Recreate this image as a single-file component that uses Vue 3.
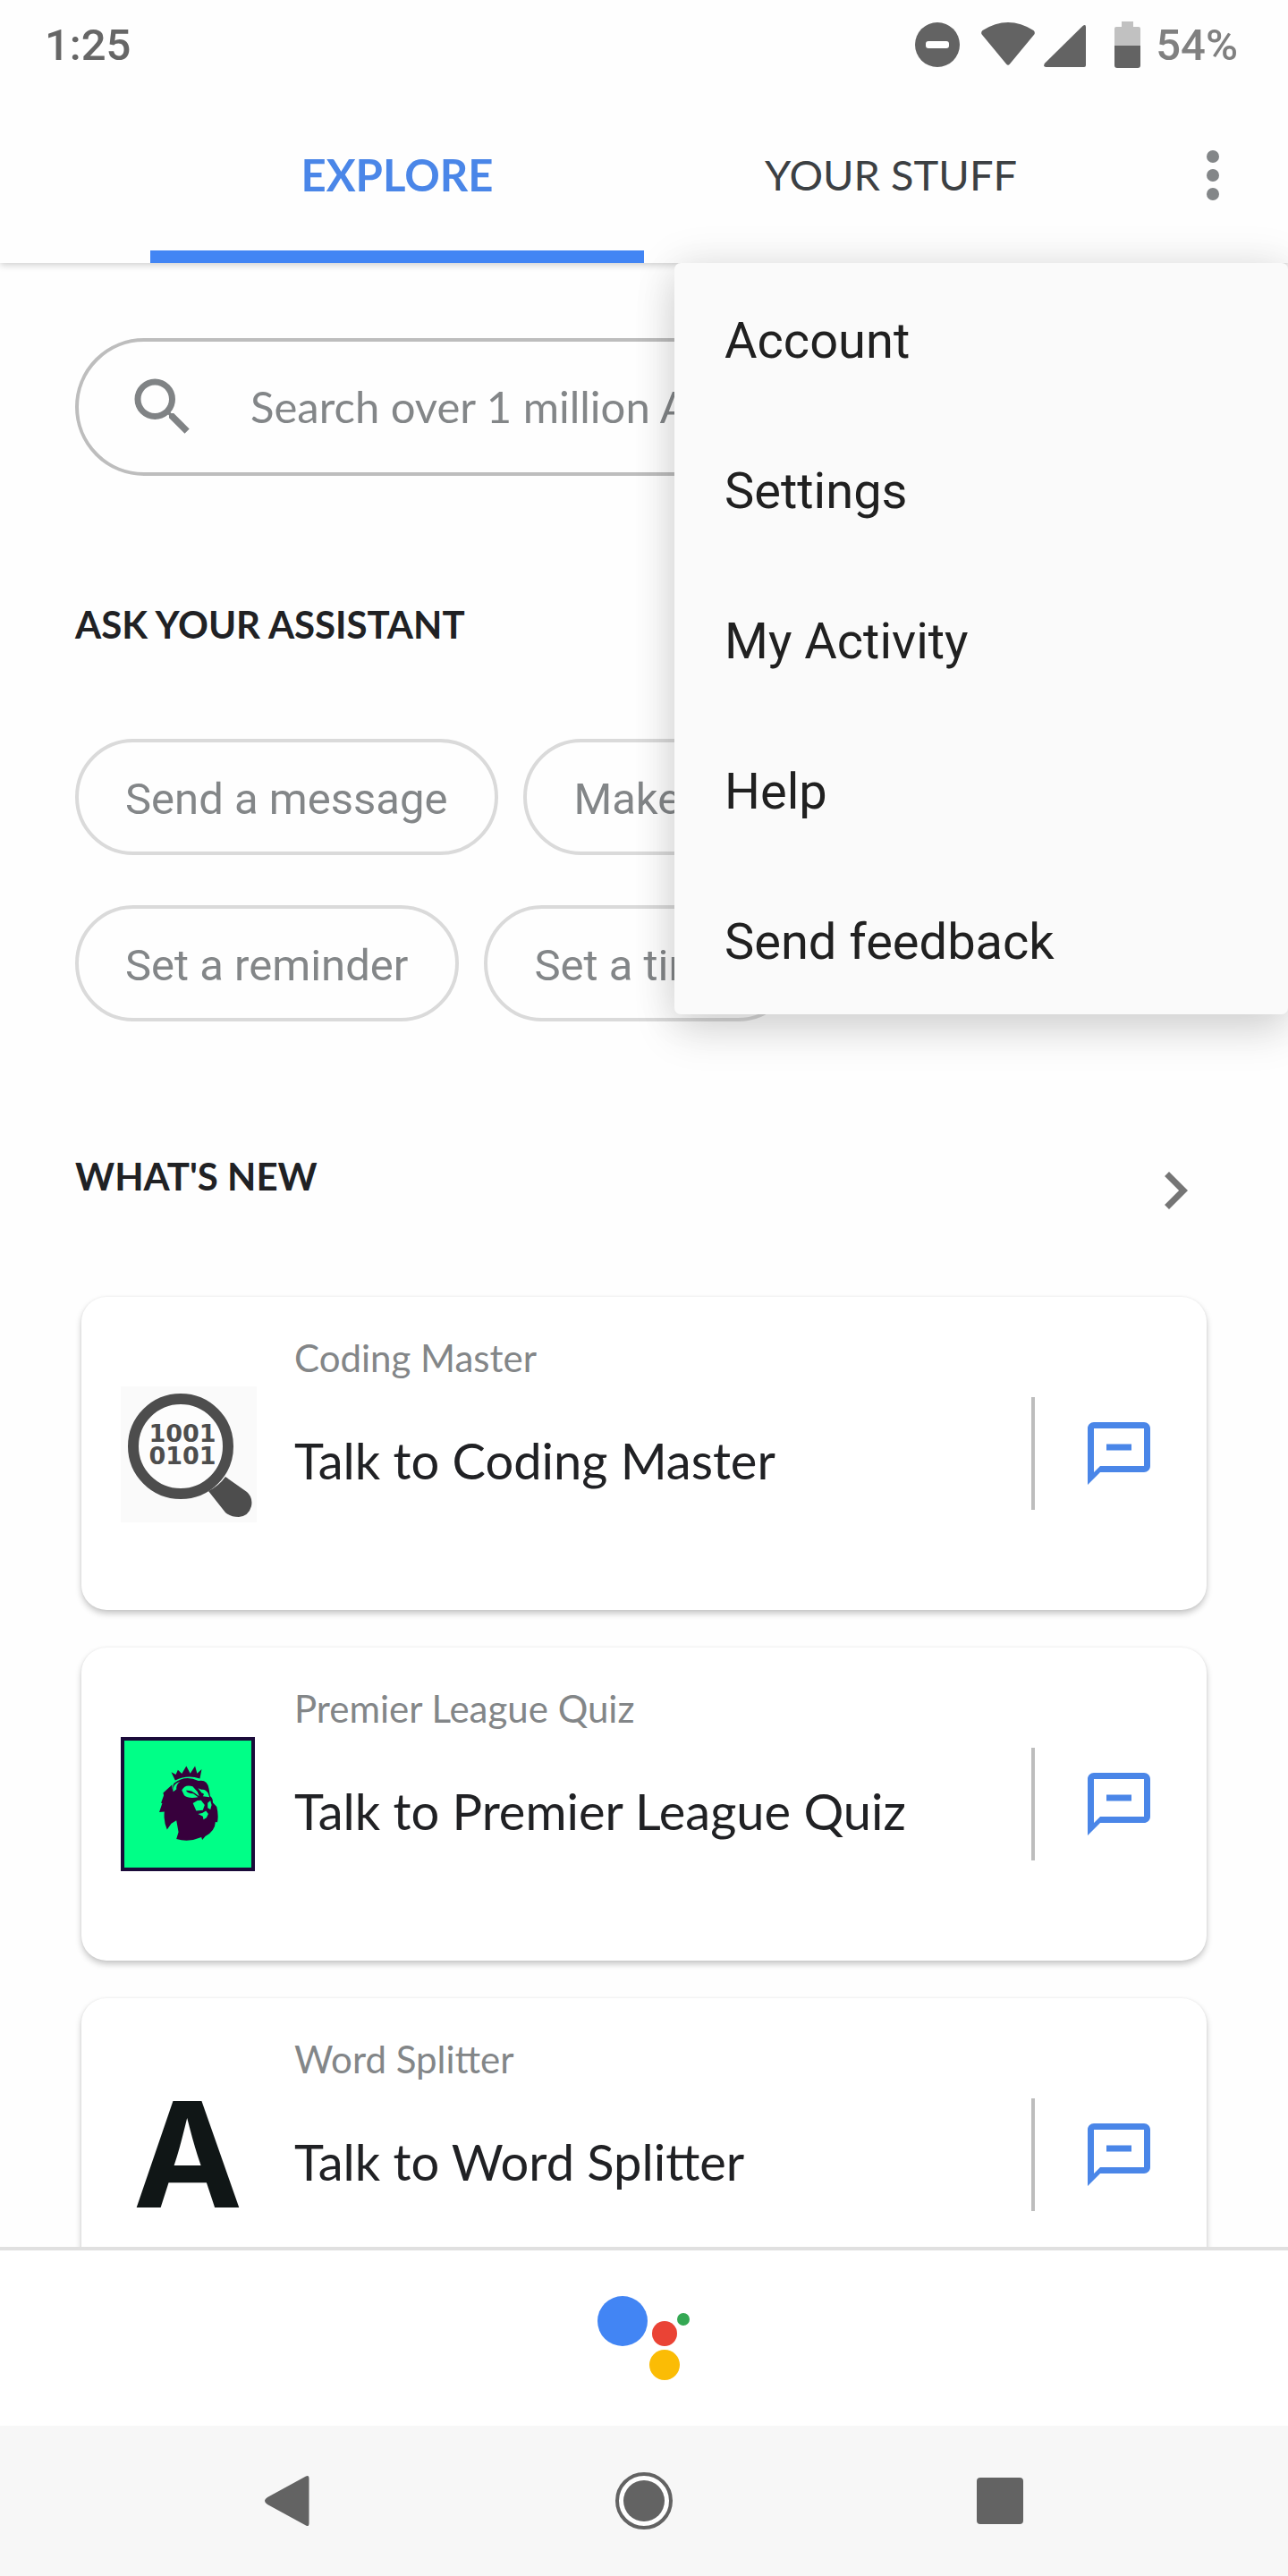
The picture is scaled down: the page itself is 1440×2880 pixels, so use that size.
<template>
  <div class="app">
    <div class="status">
      <span class="clock">1:25</span>
      <svg class="st-dnd" viewBox="0 0 50 50" aria-hidden="true">
        <circle cx="25" cy="25" r="25" />
        <rect x="12" y="21" width="26" height="8" rx="3" fill="#fff" />
      </svg>
      <svg class="st-wifi" viewBox="0 0 60 50" aria-hidden="true">
        <path d="M1.500 9Q30-9 58.500 9q2.200 2 .8 4.500L32 46.500q-2 2.500-4 0L.7 13.500Q-.7 11 1.500 9z" />
      </svg>
      <svg class="st-signal" viewBox="0 0 48 50" aria-hidden="true">
        <path d="M43.500 4Q47 1.500 47 5.500V48q0 2-2 2H2.500Q-1 50 .8 46z" />
      </svg>
      <svg class="st-battery" viewBox="0 0 30 52" aria-hidden="true">
        <path d="M8 0h13v6h6q2 0 2 2v19H0V8q0-2 2-2h6z" fill="#c1c1c1" />
        <path d="M0 27h29v22q0 3-3 3H3q-3 0-3-3z" />
      </svg>
      <span class="percent">54%</span>
    </div>

    <header class="header">
      <nav class="tabs">
        <a v-for="t in tabs" :key="t" href="#" :class="['tab', { active: t === current }]"
          @click.prevent="current = t">{{ t }}</a>
      </nav>
      <button class="more" type="button" aria-label="More options" @click="menuOpen = !menuOpen">
        <svg viewBox="0 0 84 84" aria-hidden="true">
          <circle cx="42" cy="21" r="7" />
          <circle cx="42" cy="42" r="7" />
          <circle cx="42" cy="63" r="7" />
        </svg>
      </button>
      <div v-if="menuOpen" class="menu">
        <button v-for="m in menuItems" :key="m" type="button" class="menu-item">{{ m }}</button>
      </div>
    </header>

    <main class="content">
      <label class="search">
        <svg class="icon" viewBox="0 0 24 24" aria-hidden="true">
          <path d="M15.500 14h-.79l-.28-.27A6.470 6.470 0 0 0 16 9.500 6.500 6.500 0 1 0 9.500 16c1.610 0 3.090-.59 4.230-1.570l.27.28v.79l5 4.990L20.490 19l-4.990-5zm-6 0C7.010 14 5 11.990 5 9.500S7.010 5 9.500 5 14 7.010 14 9.500 11.990 14 9.500 14z" />
        </svg>
        <input type="text" placeholder="Search over 1 million Actions" aria-label="Search Actions">
      </label>

      <h2 class="heading ask">ASK YOUR ASSISTANT</h2>
      <div class="chips">
        <div v-for="(row, i) in chips" :key="i" class="chip-row">
          <button v-for="c in row" :key="c" type="button" class="chip">{{ c }}</button>
        </div>
      </div>

      <div class="section-head">
        <h2 class="heading">WHAT'S NEW</h2>
        <button class="next" type="button" aria-label="See all new Actions">
          <svg class="icon" viewBox="0 0 24 24" aria-hidden="true">
            <path d="M10 6L8.590 7.410 13.170 12l-4.580 4.590L10 18l6-6z" />
          </svg>
        </button>
      </div>

      <div class="cards">
        <article v-for="card in cards" :key="card.name" class="card">
          <svg v-if="card.logo === 'coding'" class="logo" viewBox="0 0 150 150" aria-hidden="true">
            <rect width="152" height="152" fill="#fafafa" />
            <circle cx="67" cy="67" r="53" fill="#fdfdfd" stroke="#4d4d4d" stroke-width="12" />
            <path d="M117 101L141 118Q148 124 146 134Q143 145 132 146Q123 146 117 141L98 117Q110 111 117 101z" fill="#4d4d4d" />
            <text x="69" y="62" class="bits">1001</text>
            <text x="69" y="87" class="bits">0101</text>
          </svg>
          <svg v-else-if="card.logo === 'league'" class="logo" viewBox="45 36 446 446" aria-hidden="true">
            <rect x="51" y="42" width="434" height="434" fill="#00ff87" stroke="#1b0b3a" stroke-width="12" />
            <g fill="#37003c">
              <path d="M213 153L228 161 235 145 248 158 263 133 276 157 292 133 299 157 314 143 308 174Q266 160 226 180z" />
              <path d="M222 190Q260 160 303 182Q333 176 338 208L342 232Q352 240 351 254L364 268Q371 296 366 320L360 318Q358 350 326 366L316 378 313 369Q272 387 230 375L237 352 230 313 213 324 199 344Q187 318 190 284L173 286 183 256 179 255 188 230 186 222 216 194Q214 208 220 216Q216 200 222 190z" />
            </g>
            <g fill="#00ff87">
              <path d="M219 218Q216 192 242 184Q228 196 230 210z" />
              <path d="M248 213Q258 192 284 200L300 218 306 233 290 222Q280 212 262 214Q266 224 286 224L302 236Q270 242 256 230z" />
              <path d="M302 206L313 211Q326 208 335 222L340 236 318 233Q326 224 314 222z" />
              <path d="M285 256L300 247 312 246 324 262 318 279 296 281z" />
              <path d="M334 255L343 247 347 262 343 277 334 272z" />
              <path d="M302 292L316 289 328 281 336 292 330 304 320 310 318 300z" />
            </g>
          </svg>
          <svg v-else class="logo" viewBox="0 0 150 150" aria-hidden="true">
            <text x="75" y="134" class="letter">A</text>
          </svg>
          <div class="card-text">
            <p class="card-name">{{ card.name }}</p>
            <h3 class="card-title">Talk to {{ card.name }}</h3>
          </div>
          <button class="talk" type="button" :aria-label="'Talk to ' + card.name">
            <svg class="icon" viewBox="0 0 24 24" aria-hidden="true">
              <path d="M20 2H4c-1.100 0-2 .9-2 2v18l4-4h14c1.100 0 2-.9 2-2V4c0-1.100-.9-2-2-2zm0 14H6l-2 2V4h16v12zM8 9h8v2H8z" />
            </svg>
          </button>
        </article>
      </div>
    </main>

    <footer class="assistant">
      <button type="button" aria-label="Google Assistant">
        <svg viewBox="0 0 104 96" aria-hidden="true">
          <circle cx="28" cy="29" r="28" fill="#4285f4" />
          <circle cx="75" cy="43" r="14" fill="#ea4335" />
          <circle cx="96" cy="27" r="7" fill="#34a853" />
          <circle cx="75" cy="78" r="17" fill="#fbbc05" />
        </svg>
      </button>
    </footer>

    <nav class="sysnav">
      <button type="button" aria-label="Back">
        <svg viewBox="0 0 64 64" aria-hidden="true">
          <path d="M54 4.500Q57.500 2.500 57.500 7V57Q57.500 61.500 54 59.500L11 36Q5 32 11 28z" />
        </svg>
      </button>
      <button type="button" aria-label="Home">
        <svg viewBox="0 0 64 64" aria-hidden="true">
          <circle cx="32" cy="32" r="30" fill="#fff" stroke="#636363" stroke-width="4" />
          <circle cx="32" cy="32" r="23" />
        </svg>
      </button>
      <button type="button" aria-label="Recent apps">
        <svg viewBox="0 0 64 64" aria-hidden="true">
          <rect x="4" y="6" width="52" height="52" rx="4" />
        </svg>
      </button>
    </nav>
  </div>
</template>

<script setup>
import { ref } from 'vue'

const tabs = ['EXPLORE', 'YOUR STUFF']
const current = ref('EXPLORE')
const menuOpen = ref(true)
const menuItems = ['Account', 'Settings', 'My Activity', 'Help', 'Send feedback']

const chips = [
  ['Send a message', 'Make a call'],
  ['Set a reminder', 'Set a timer'],
]

const cards = [
  { name: 'Coding Master', logo: 'coding' },
  { name: 'Premier League Quiz', logo: 'league' },
  { name: 'Word Splitter', logo: 'letter' },
]
</script>

<style>
body { margin: 0; background: #fefefe; }
</style>

<style scoped>
.app { display: flex; flex-direction: column; height: 100vh; overflow: hidden; background: #fefefe; color: #202124; font-family: Lato, "Open Sans", sans-serif; }
button { margin: 0; padding: 0; border: 0; background: none; font: inherit; color: inherit; cursor: pointer; }
svg { display: block; flex: none; }
.icon { width: 84px; height: 84px; fill: currentColor; }

.status { position: relative; z-index: 3; display: flex; align-items: center; flex: none; height: 98px; padding: 2px 56px 0 50px; box-sizing: border-box; background: #fefefe; font-family: Roboto, sans-serif; font-size: 49px; font-weight: 500; color: #666; fill: #636363; }
.clock { flex: 1; }
.percent { margin-left: 16px; color: #808080; }
.st-dnd { width: 50px; height: 50px; }
.st-wifi { width: 60px; height: 50px; margin-left: 24px; }
.st-signal { width: 48px; height: 50px; margin-left: 10px; }
.st-battery { width: 30px; height: 52px; margin-left: 31px; }

.header { position: relative; z-index: 2; display: flex; flex: none; height: 196px; padding-left: 168px; background: #fefefe; box-shadow: 0 2px 8px rgba(0,0,0,0.2); }
.tabs { display: flex; flex: 1; }
.tab { flex: 1; padding-top: 12px; border-bottom: 14px solid transparent; font-size: 47px; line-height: 170px; text-align: center; text-decoration: none; color: #3c4043; }
.tab.active { border-color: #4285f4; font-size: 49px; font-weight: 700; color: #4a86e8; }
.more { display: flex; align-items: center; justify-content: center; width: 168px; }
.more svg { width: 84px; height: 84px; fill: #838688; }

.menu { position: absolute; top: 100%; right: 0; width: 686px; max-width: 100%; border-radius: 7px; background: #fafafa; box-shadow: 0 20px 48px rgba(0,0,0,0.13), 0 0 48px rgba(0,0,0,0.1); }
.menu-item { display: block; width: 100%; padding: 6px 56px 0; box-sizing: border-box; height: 168px; font-family: Roboto, sans-serif; font-size: 56px; text-align: left; color: #202020; }

.content { flex: 1; min-height: 0; overflow: hidden; padding: 84px 84px 0; }
.search { display: flex; align-items: center; height: 154px; padding: 0 52px; box-sizing: border-box; border: 4px solid #bdbdbd; border-radius: 77px; color: #808385; }
.search input { flex: 1; min-width: 0; margin-left: 56px; padding: 0 0 2px; border: 0; outline: 0; background: none; font: inherit; font-size: 49px; color: #202124; }
.search input::placeholder { color: #838688; opacity: 1; }

.heading { margin: 0; font-size: 42px; line-height: 52px; font-weight: 700; }
.ask { margin-top: 140px; }
.chips { display: flex; flex-direction: column; gap: 56px; margin-top: 102px; }
.chip-row { display: flex; gap: 28px; }
.chip { height: 130px; padding: 4px 53px 0 52px; box-sizing: border-box; border: 4px solid #dadada; border-radius: 65px; font-family: Roboto, sans-serif; font-size: 49px; color: #838688; white-space: nowrap; }

.section-head { display: flex; align-items: flex-start; justify-content: space-between; margin-top: 147px; }
.next { color: #757575; }

.cards { display: flex; flex-direction: column; gap: 42px; margin: 77px 7px 0; }
.card { display: flex; align-items: center; height: 350px; padding: 0 56px 0 44px; box-sizing: border-box; border-radius: 28px; background: #fff; box-shadow: 0 4px 7px rgba(0,0,0,0.22), 0 0 3px rgba(0,0,0,0.06); }
.logo { width: 150px; height: 150px; overflow: visible; }
.bits { font-family: "DejaVu Sans", sans-serif; font-size: 27px; font-weight: 700; text-anchor: middle; fill: #4d4d4d; }
.letter { font-family: Inter, sans-serif; font-size: 164px; font-weight: 700; text-anchor: middle; fill: #101616; }
.card-text { flex: 1; align-self: flex-start; min-width: 0; padding: 42px 0 0 44px; }
.card-name { margin: 0; font-size: 42px; line-height: 52px; color: #838688; }
.card-title { margin: 54px 0 0; font-size: 56px; line-height: 70px; font-weight: 400; }
.talk { display: flex; align-items: center; height: 126px; padding-left: 52px; border-left: 4px solid #bdbdbd; color: #4a86e8; }

.assistant { display: flex; justify-content: center; align-items: center; flex: none; height: 200px; box-sizing: border-box; border-top: 4px solid #e0e0e0; background: #fff; }
.assistant svg { width: 104px; height: 96px; }

.sysnav { display: grid; grid-template-columns: repeat(3, 1fr); flex: none; height: 168px; padding: 0 120px; background: #f7f7f7; }
.sysnav button { display: flex; align-items: center; justify-content: center; }
.sysnav svg { width: 64px; height: 64px; fill: #636363; }
</style>
